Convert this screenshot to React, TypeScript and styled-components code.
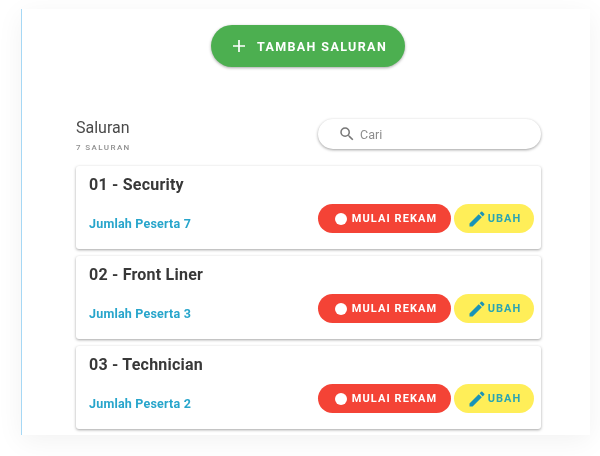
import React from "react";
import styled, { createGlobalStyle } from "styled-components";

const Global = createGlobalStyle`
  html, body { margin: 0; padding: 0; background: #fff; }
  body { width: 600px; height: 456px; overflow: hidden; font-family: Roboto, "Liberation Sans", sans-serif; }
`;

const Stage = styled.div`
  width: 600px;
  height: 456px;
  padding: 9px 10px 21px 21px;
  box-sizing: border-box;
  filter: blur(0.55px);
`;

const Panel = styled.main`
  height: 426px;
  box-sizing: border-box;
  padding: 16px 49px 0 54px;
  background: #fff;
  border-left: 1px solid #a6d8f5;
  box-shadow: 0 6px 26px rgba(0, 0, 0, 0.055);
  overflow: hidden;
  display: flex;
  flex-direction: column;
`;

const AddButton = styled.button`
  align-self: center;
  width: 194px;
  height: 42px;
  margin-right: 1px;
  border: 0;
  border-radius: 21px;
  background: #4caf50;
  color: #fff;
  display: flex;
  align-items: center;
  justify-content: center;
  gap: 11px;
  font: 700 12.5px Roboto, sans-serif;
  letter-spacing: 1.38px;
  box-shadow: 0 1px 3px rgba(0, 0, 0, 0.35);
  padding: 0 0 0 3px;
`;

const Header = styled.header`
  margin-top: 52px;
  height: 47px;
  display: flex;
  justify-content: space-between;
  align-items: flex-start;
`;

const Titles = styled.div`
  display: flex;
  flex-direction: column;
`;

const Title = styled.h2`
  margin: 0;
  font: 400 16px/18px Roboto, sans-serif;
  color: #4a4a4a;
`;

const Count = styled.span`
  margin-top: 6px;
  font: 500 8px/10px Roboto, sans-serif;
  letter-spacing: 1.4px;
  color: #8f8f8f;
`;

const Search = styled.label`
  width: 223px;
  height: 30px;
  border-radius: 15px;
  background: #fff;
  box-shadow: 0 1px 3px rgba(0, 0, 0, 0.38);
  display: flex;
  align-items: center;
  gap: 4px;
  padding-left: 20px;
  box-sizing: border-box;
  font: 400 12.5px Roboto, sans-serif;
  color: #8d8d8d;
`;

const List = styled.section`
  display: flex;
  flex-direction: column;
  gap: 7px;
`;

const Card = styled.article`
  height: 83px;
  box-sizing: border-box;
  padding: 9px 7px 0 13px;
  border-radius: 3px;
  background: #fff;
  box-shadow: 0 1px 3px rgba(0, 0, 0, 0.36);
  display: flex;
  flex-direction: column;
`;

const CardTitle = styled.h3`
  margin: 0;
  font: 700 16px/20px Roboto, sans-serif;
  letter-spacing: 0.22px;
  color: #383838;
`;

const CardRow = styled.div`
  margin-top: 9px;
  display: flex;
  align-items: center;
  justify-content: space-between;
`;

const Participants = styled.span`
  font: 700 12.5px Roboto, sans-serif;
  letter-spacing: 0.2px;
  color: #27a5cb;
  padding-top: 10px;
`;

const Actions = styled.div`
  display: flex;
  gap: 3px;
`;

const Pill = styled.button<{ $bg: string; $fg: string; $w: number; $shift: number }>`
  width: ${(p) => p.$w}px;
  height: 29px;
  border: 0;
  border-radius: 15px;
  padding: 0 0 0 ${(p) => p.$shift}px;
  background: ${(p) => p.$bg};
  color: ${(p) => p.$fg};
  display: flex;
  align-items: center;
  justify-content: center;
  gap: 5px;
  font: 700 11px Roboto, sans-serif;
  letter-spacing: 1.08px;
`;

const Dot = styled.i`
  width: 12px;
  height: 12px;
  border-radius: 50%;
  background: #fff;
`;

const PencilIcon = styled.svg`
  margin-right: -4px;
`;

const channels = [
  { name: "01 - Security", count: 7 },
  { name: "02 - Front Liner", count: 3 },
  { name: "03 - Technician", count: 2 },
];

export default function App() {
  return (
    <Stage>
      <Global />
      <Panel>
        <AddButton>
          <svg width="14" height="14" viewBox="0 0 14 14" fill="none" stroke="#fff" strokeWidth="1.7">
            <path d="M7 1v12M1 7h12" />
          </svg>
          TAMBAH SALURAN
        </AddButton>
        <Header>
          <Titles>
            <Title>Saluran</Title>
            <Count>7 SALURAN</Count>
          </Titles>
          <Search>
            <svg width="18" height="18" viewBox="0 0 24 24" fill="#777">
              <path d="M15.5 14h-.79l-.28-.27A6.47 6.47 0 0 0 16 9.5 6.5 6.5 0 1 0 9.5 16c1.61 0 3.09-.59 4.23-1.57l.27.28v.79l5 4.99L20.49 19l-4.99-5zm-6 0C7.01 14 5 11.99 5 9.5S7.01 5 9.5 5 14 7.01 14 9.5 11.99 14 9.5 14z" />
            </svg>
            Cari
          </Search>
        </Header>
        <List>
          {channels.map((c) => (
            <Card key={c.name}>
              <CardTitle>{c.name}</CardTitle>
              <CardRow>
                <Participants>Jumlah Peserta {c.count}</Participants>
                <Actions>
                  <Pill $bg="#f44336" $fg="#fff" $w={133} $shift={3}>
                    <Dot />
                    MULAI REKAM
                  </Pill>
                  <Pill $bg="#ffee58" $fg="#2aa5b4" $w={80} $shift={0}>
                    <PencilIcon width="20" height="20" viewBox="0 0 24 24" fill="#1a94b8">
                      <path d="M3 17.25V21h3.75L17.81 9.94l-3.75-3.75L3 17.25zM20.71 7.04a1 1 0 0 0 0-1.41l-2.34-2.34a1 1 0 0 0-1.41 0l-1.83 1.83 3.75 3.75 1.83-1.83z" />
                    </PencilIcon>
                    UBAH
                  </Pill>
                </Actions>
              </CardRow>
            </Card>
          ))}
        </List>
      </Panel>
    </Stage>
  );
}
